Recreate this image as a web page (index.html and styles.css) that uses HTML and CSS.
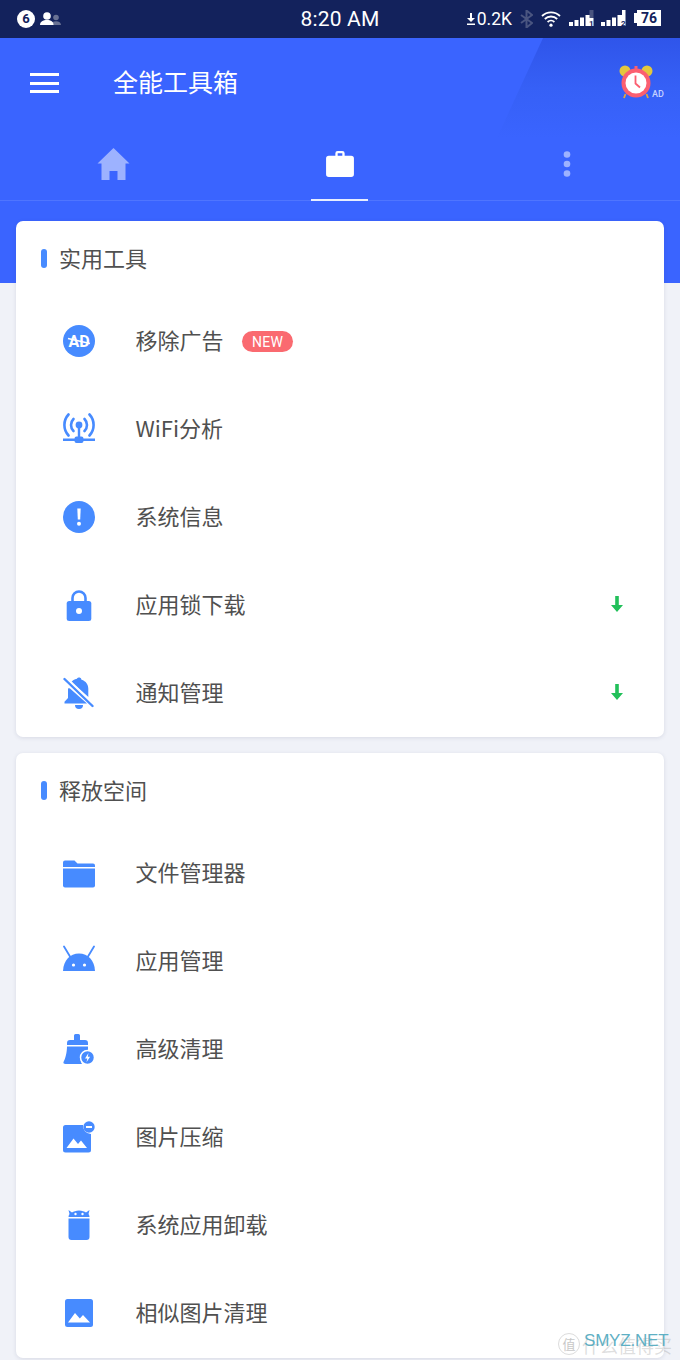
FILE: index.html
```html
<!DOCTYPE html>
<html lang="zh">
<head>
<meta charset="utf-8">
<title>全能工具箱</title>
<link rel="stylesheet" href="styles.css">
</head>
<body>
<div class="screen">
  <div class="statusbar">
    <div class="st-left">
      <svg width="18" height="18" viewBox="0 0 18 18"><circle cx="9" cy="9" r="9" fill="#fff"/><text x="9" y="13.4" text-anchor="middle" class="st-six">6</text></svg>
      <svg width="21" height="14" viewBox="0 0 21 14"><g fill="#687193"><circle cx="16" cy="5.500" r="2.800"/><path d="M11 13c0-2.500 2-3.800 5-3.800s5 1.300 5 3.800z"/></g><g fill="#fff"><circle cx="7" cy="4" r="3.800"/><path d="M0 13c0-3.500 3-5 7-5s6.500 1.500 6.500 5z"/></g></svg>
    </div>
    <div class="st-time">8:20 AM</div>
    <div class="st-right">
      <svg width="8" height="14" viewBox="0 0 8 14"><path d="M3 1h2v5h3L4 10 0 6h3zM0 11.500h8V13H0z" fill="#fff"/></svg>
      <span class="st-speed">0.2K</span>
      <svg class="st-bt" width="13" height="18" viewBox="0 0 13 18"><path d="M1 5l11 8-5.500 4.500V.5L12 5 1 13" fill="none" stroke="#4a5580" stroke-width="2"/></svg>
      <svg class="st-wifi" width="20" height="16" viewBox="0 0 20 16"><g fill="none" stroke="#fff" stroke-width="1.800"><path d="M1 5a13 13 0 0 1 18 0"/><path d="M3.800 8a9 9 0 0 1 12.400 0"/><path d="M6.600 11a5 5 0 0 1 6.800 0"/></g><circle cx="10" cy="14.200" r="1.600" fill="#fff"/></svg>
      <svg class="st-sig" width="25" height="16" viewBox="0 0 25 16"><g fill="#fff"><rect x="0" y="12" width="4" height="4"/><rect x="5.500" y="10" width="4" height="6"/><rect x="11" y="7.500" width="4" height="8.500"/><path d="M16.500 5H21v11h-4.500z"/><rect x="21" y="8" width="3.500" height="8"/></g><rect x="20.500" y="0" width="4" height="8" fill="#4a5580"/><text x="20" y="15.500" class="st-simno">1</text></svg>
      <svg class="st-sig2" width="25" height="16" viewBox="0 0 25 16"><g fill="#fff"><rect x="0" y="12" width="4" height="4"/><rect x="5.500" y="10" width="4" height="6"/><rect x="11" y="7.500" width="4" height="8.500"/><path d="M16.500 5H21V0h3.500v16h-8z"/></g><text x="20" y="15.500" class="st-simno">2</text></svg>
      <svg class="st-bat" width="27" height="16" viewBox="0 0 27 16"><path d="M3 0h24v16H3v-3H0V3h3z" fill="#fff"/><text x="15" y="13" text-anchor="middle" class="st-batno">76</text></svg>
    </div>
  </div>

  <header class="hero">
    <div class="hero-deco"></div>
    <div class="appbar">
      <div class="burger"><span></span><span></span><span></span></div>
      <h1 class="app-title">全能工具箱</h1>
      <div class="alarm">
        <svg width="34" height="34" viewBox="0 0 34 34">
          <circle cx="6" cy="6" r="5.500" fill="#e3c73d"/><circle cx="28" cy="6" r="5.500" fill="#e3c73d"/>
          <path d="M6.500 29l-1.500 4M27.500 29l1.500 4" stroke="#e3a53d" stroke-width="1.800"/>
          <rect x="15.500" y="1" width="3" height="4" fill="#fb5f70"/>
          <circle cx="17" cy="18" r="14.500" fill="#fb5f70"/>
          <circle cx="17" cy="18" r="10.500" fill="#fff"/>
          <path d="M16.500 10.500v8l4.500 4" fill="none" stroke="#fb5f70" stroke-width="1.800"/>
        </svg>
        <span class="alarm-ad">AD</span>
      </div>
    </div>
    <nav class="tabs">
      <div class="tab">
        <svg width="33" height="33" viewBox="0 0 33 33"><path d="M16.500 0L32.500 15.500 28.500 15.500V32H20.500V23H12.500V32H4.500V15.500H.5z" fill="#9db2ff"/></svg>
      </div>
      <div class="tab tab-active">
        <svg width="28" height="26" viewBox="0 0 30 28"><path d="M10 5V2.500A2.500 2.500 0 0 1 12.500 0h5A2.500 2.500 0 0 1 20 2.500V5h7a3 3 0 0 1 3 3v17a3 3 0 0 1-3 3H3a3 3 0 0 1-3-3V8a3 3 0 0 1 3-3zm2.500 0h5V2.500h-5z" fill="#fff" fill-rule="evenodd"/></svg>
      </div>
      <div class="tab">
        <svg width="8" height="26" viewBox="0 0 8 26"><g fill="#9db2ff"><circle cx="4" cy="3.500" r="3.300"/><circle cx="4" cy="13" r="3.300"/><circle cx="4" cy="22.500" r="3.300"/></g></svg>
      </div>
    </nav>
  </header>

  <main class="cards">
    <section class="card">
      <div class="card-head"><i class="card-bar"></i><h2 class="card-title">实用工具</h2></div>
      <div class="row">
        <svg class="ico" viewBox="0 0 32 32"><circle cx="16" cy="16" r="16" fill="#478bff"/><text x="16" y="21.500" text-anchor="middle" class="ad-mark">AD</text><path d="M5 13.500l22 5" stroke="#fff" stroke-width="1.300" fill="none"/></svg>
        <span class="row-label">移除广告</span><span class="badge">NEW</span>
      </div>
      <div class="row">
        <svg class="ico" viewBox="0 0 32 32"><g fill="none" stroke="#478bff" stroke-width="2.600" stroke-linecap="round"><path d="M5.500 1.500a15.500 15.500 0 0 0 0 21"/><path d="M26.500 1.500a15.500 15.500 0 0 1 0 21"/><path d="M10.500 6a8.500 8.500 0 0 0 0 12"/><path d="M21.500 6a8.500 8.500 0 0 1 0 12"/></g><circle cx="16" cy="12" r="3.400" fill="#478bff"/><path d="M14.800 15h2.400v9h-2.400zM0 25.500h11.500a2 2 0 0 1 2-2h5a2 2 0 0 1 2 2H32v2.500H20.500a2 2 0 0 1-2 2h-5a2 2 0 0 1-2-2H0z" fill="#478bff"/></svg>
        <span class="row-label">WiFi分析</span>
      </div>
      <div class="row">
        <svg class="ico" viewBox="0 0 32 32"><circle cx="16" cy="16" r="16" fill="#478bff"/><path d="M14.300 7.500h3.400l-.5 11h-2.400z" fill="#fff"/><circle cx="16" cy="22.800" r="2" fill="#fff"/></svg>
        <span class="row-label">系统信息</span>
      </div>
      <div class="row">
        <svg class="ico" viewBox="0 0 32 32"><path d="M9.500 12.500V9a6.500 6.500 0 0 1 13 0v3.500" fill="none" stroke="#478bff" stroke-width="2.600"/><rect x="3.700" y="12" width="24.600" height="20" rx="2.500" fill="#478bff"/><circle cx="16" cy="22" r="3" fill="#fff"/></svg>
        <span class="row-label">应用锁下载</span>
        <svg class="arrow" viewBox="0 0 12 16"><path d="M4.200 0h3.600v9H12l-6 7-6-7h4.200z" fill="#22c05a"/></svg>
      </div>
      <div class="row">
        <svg class="ico" viewBox="0 0 32 32"><path d="M14 1.500a2.500 2.500 0 0 1 4.500 1.200c4.500 1.300 6.800 5 6.800 9v8.300l-17-15c1.200-1.500 3-2.700 5.700-3.300zM7 11.600L24 26.500H1.500v-1.800l3.500-3.600v-9.300c0-.5.500-.8 2-.2z" fill="#478bff"/><path d="M12 28h8a4 4 0 0 1-8 0z" fill="#478bff"/><path d="M1.500 2l28 27" stroke="#478bff" stroke-width="2.400" stroke-linecap="round"/><path d="M4 1l27 26" stroke="#fff" stroke-width="1.600"/></svg>
        <span class="row-label">通知管理</span>
        <svg class="arrow" viewBox="0 0 12 16"><path d="M4.200 0h3.600v9H12l-6 7-6-7h4.200z" fill="#22c05a"/></svg>
      </div>
    </section>

    <section class="card card-last">
      <div class="card-head"><i class="card-bar"></i><h2 class="card-title">释放空间</h2></div>
      <div class="row">
        <svg class="ico" viewBox="0 0 32 32"><path d="M0 5.500A2 2 0 0 1 2 3.500h9.500l3 3H30a2 2 0 0 1 2 2V10H0z" fill="#478bff"/><path d="M0 11.500h32v17a2 2 0 0 1-2 2H2a2 2 0 0 1-2-2z" fill="#478bff"/></svg>
        <span class="row-label">文件管理器</span>
      </div>
      <div class="row">
        <svg class="ico" viewBox="0 0 32 32"><path d="M1 1.500l6 10M31 1.500l-6 10" stroke="#478bff" stroke-width="1.800" stroke-linecap="round"/><path d="M0 26C.5 15 7 8.500 16 8.500S31.500 15 32 26z" fill="#478bff"/><circle cx="10.500" cy="20" r="1.600" fill="#fff"/><circle cx="21.500" cy="20" r="1.600" fill="#fff"/></svg>
        <span class="row-label">应用管理</span>
      </div>
      <div class="row">
        <svg class="ico" viewBox="0 0 32 32"><path d="M12.500 1h3a1.500 1.500 0 0 1 1.500 1.500V7h5a3 3 0 0 1 3 3v2H4v-2a3 3 0 0 1 3-3h4V2.500A1.500 1.500 0 0 1 12.500 1z" fill="#478bff"/><path d="M4 13.500h21v3.500a9 9 0 0 0-6 14H2.500c-1.500 0-2.500-1-2-2 2-3.500 3.500-10 3.500-15.500z" fill="#478bff"/><circle cx="24.500" cy="24.500" r="7" fill="#478bff" stroke="#fff" stroke-width="1.500"/><path d="M25.500 20l-3.500 5.500h2.300l-.8 3.800 3.600-5.600h-2.300z" fill="#fff"/></svg>
        <span class="row-label">高级清理</span>
      </div>
      <div class="row">
        <svg class="ico" viewBox="0 0 32 32"><path d="M2.500 4H20a8 8 0 0 0 8 9v16a2.500 2.500 0 0 1-2.500 2.500h-23A2.500 2.500 0 0 1 0 29V6.500A2.500 2.500 0 0 1 2.500 4z" fill="#478bff"/><path d="M3.500 27l7-9.500 4.500 5.500 3-3.500 6 7.500z" fill="#fff"/><circle cx="26" cy="6" r="5.700" fill="#478bff"/><path d="M23 5h6v2h-6z" fill="#fff"/></svg>
        <span class="row-label">图片压缩</span>
      </div>
      <div class="row">
        <svg class="ico" viewBox="0 0 32 32"><path d="M5.500 1l3.500 2.500C10.500 2.500 13 1.500 16 1.500s5.500 1 7 2L26.500 1l-1 4c.7.800 1 2 1 3h-21c0-1 .3-2.200 1-3z" fill="#478bff"/><circle cx="12.500" cy="5" r="1.200" fill="#fff"/><circle cx="19.500" cy="5" r="1.200" fill="#fff"/><path d="M5.500 9.500h21V28a3 3 0 0 1-3 3h-15a3 3 0 0 1-3-3z" fill="#478bff"/></svg>
        <span class="row-label">系统应用卸载</span>
      </div>
      <div class="row">
        <svg class="ico" viewBox="0 0 32 32"><rect x="2" y="2" width="28" height="28" rx="2.500" fill="#478bff"/><path d="M5 25.500l7-9.500 4.800 5.500 3.200-3.500 7 7.500z" fill="#fff"/></svg>
        <span class="row-label">相似图片清理</span>
      </div>
    </section>
  </main>

  <div class="watermark">
    <span class="wm-seal">值</span>
    <span class="wm-cn">什么值得买</span>
    <span class="wm-en">SMYZ.NET</span>
  </div>
</div>
</body>
</html>
```

FILE: styles.css
```css
* { box-sizing: border-box; }
html, body { margin: 0; padding: 0; }
body {
  width: 680px;
  height: 1360px;
  overflow: hidden;
  background: #f0f2f8;
  font-family: "Noto Sans CJK SC", "Noto Sans", sans-serif;
}
.screen { position: relative; width: 680px; height: 1360px; overflow: hidden; }

.statusbar {
  height: 38px;
  background: #13225c;
  display: grid;
  grid-template-columns: 1fr auto 1fr;
  align-items: center;
  color: #fff;
  font-family: Roboto, sans-serif;
}
.st-left { display: flex; align-items: center; gap: 5px; padding-left: 17px; }
.st-six { font: 700 13px Roboto, sans-serif; fill: #13225c; }
.st-time { font-size: 21px; line-height: 38px; letter-spacing: .2px; }
.st-right { display: flex; align-items: center; justify-content: flex-end; padding-right: 19px; }
.st-speed { font-size: 17.500px; margin: 0 8px 0 2px; line-height: 38px; }
.st-wifi { margin-left: 8px; }
.st-sig { margin-left: 8px; margin-top: -2px; }
.st-sig2 { margin-left: 7px; margin-top: -2px; }
.st-bat { margin-left: 8px; margin-top: -2px; }
.st-simno { font: 700 8px Roboto, sans-serif; fill: #13225c; }
.st-batno { font: 700 14px Roboto, sans-serif; fill: #13225c; }

.hero {
  position: relative;
  height: 245px;
  background: #3a64ff;
  overflow: hidden;
}
.hero-deco {
  position: absolute; top: 0; right: 0; width: 183px; height: 100px;
  background: linear-gradient(to bottom, #2f55ea 0%, #3660f6 50%, #3a64ff 100%);
  clip-path: polygon(46px 0, 100% 0, 100% 100%, 0 100%);
}
.appbar {
  position: relative;
  height: 90px;
  display: flex;
  align-items: center;
  padding: 0 16px 0 30px;
}
.burger { width: 29px; display: flex; flex-direction: column; gap: 5.500px; }
.burger span { display: block; height: 3px; background: #fff; }
.app-title {
  margin: -4px 0 0 54px;
  flex: 1;
  font-size: 25px;
  font-weight: 400;
  color: #fff;
  line-height: 36px;
}
.alarm { position: relative; width: 34px; height: 34px; margin-right: 11px; margin-top: -2px; }
.alarm svg { display: block; }
.alarm-ad {
  position: absolute; left: 33px; top: 24px;
  font: 500 9px/11px Roboto, sans-serif; color: #c5d2ff;
}
.tabs {
  position: relative;
  height: 73px;
  display: grid;
  grid-template-columns: 227px 226px 227px;
  border-bottom: 1px solid #4f75ff;
}
.tab { display: flex; align-items: center; justify-content: center; position: relative; }
.tab svg { display: block; }
.tab-active::after {
  content: "";
  position: absolute;
  left: 84px; bottom: -1px;
  width: 57px; height: 2px;
  background: #e8eeff;
}

.cards {
  position: relative;
  margin-top: -62px;
  padding: 0 16px;
  display: flex;
  flex-direction: column;
  gap: 16px;
}
.card {
  background: #fff;
  border-radius: 7px;
  box-shadow: 0 1px 4px rgba(40, 50, 90, .12);
}
.card-last { padding-bottom: 1px; }
.card-head {
  height: 76px;
  display: flex;
  align-items: center;
  gap: 12px;
  padding-left: 25px;
}
.card-bar { width: 6px; height: 19px; border-radius: 3px; background: #478bff; margin-top: -2px; }
.card-title {
  margin: 0;
  padding-bottom: 4px;
  font-size: 22px;
  font-weight: 400;
  color: #505050;
  line-height: 32px;
}
.row {
  height: 88px;
  display: flex;
  align-items: center;
  padding: 0 41px 0 47px;
}
.ico { width: 32px; height: 32px; flex: none; margin-right: 40.500px; display: block; }
.row-label { font-size: 22px; color: #505050; line-height: 32px; padding-bottom: 4px; }
.ad-mark { font: 700 16px Roboto, sans-serif; fill: #fff; }
.badge {
  margin-left: 18.500px;
  width: 51px; height: 21px;
  border-radius: 11px;
  background: #fa6a70;
  color: #fff;
  font: 400 14px/22px Roboto, sans-serif;
  letter-spacing: .3px;
  text-align: center;
}
.arrow { width: 12px; height: 16px; margin-left: auto; margin-top: -2px; display: block; }

.watermark {
  position: absolute;
  left: 558px; top: 1332px;
  width: 122px; height: 24px;
}
.wm-seal {
  position: absolute; left: 0; top: 1px;
  width: 22px; height: 22px;
  border: 1px solid #dcdcdc; border-radius: 50%;
  background: rgba(255,255,255,.6);
  color: #c8c8c8;
  font-size: 13px; line-height: 20px; text-align: center;
}
.wm-cn {
  position: absolute; left: 24px; top: 1px;
  font-size: 18px; line-height: 24px; color: rgba(170,170,170,.4);
  white-space: nowrap;
}
.wm-en {
  position: absolute; left: 26px; top: -3px;
  font: 400 17px/24px "Liberation Sans", sans-serif;
  letter-spacing: -.2px;
  color: #5fb0c4;
  white-space: nowrap;
}
```
